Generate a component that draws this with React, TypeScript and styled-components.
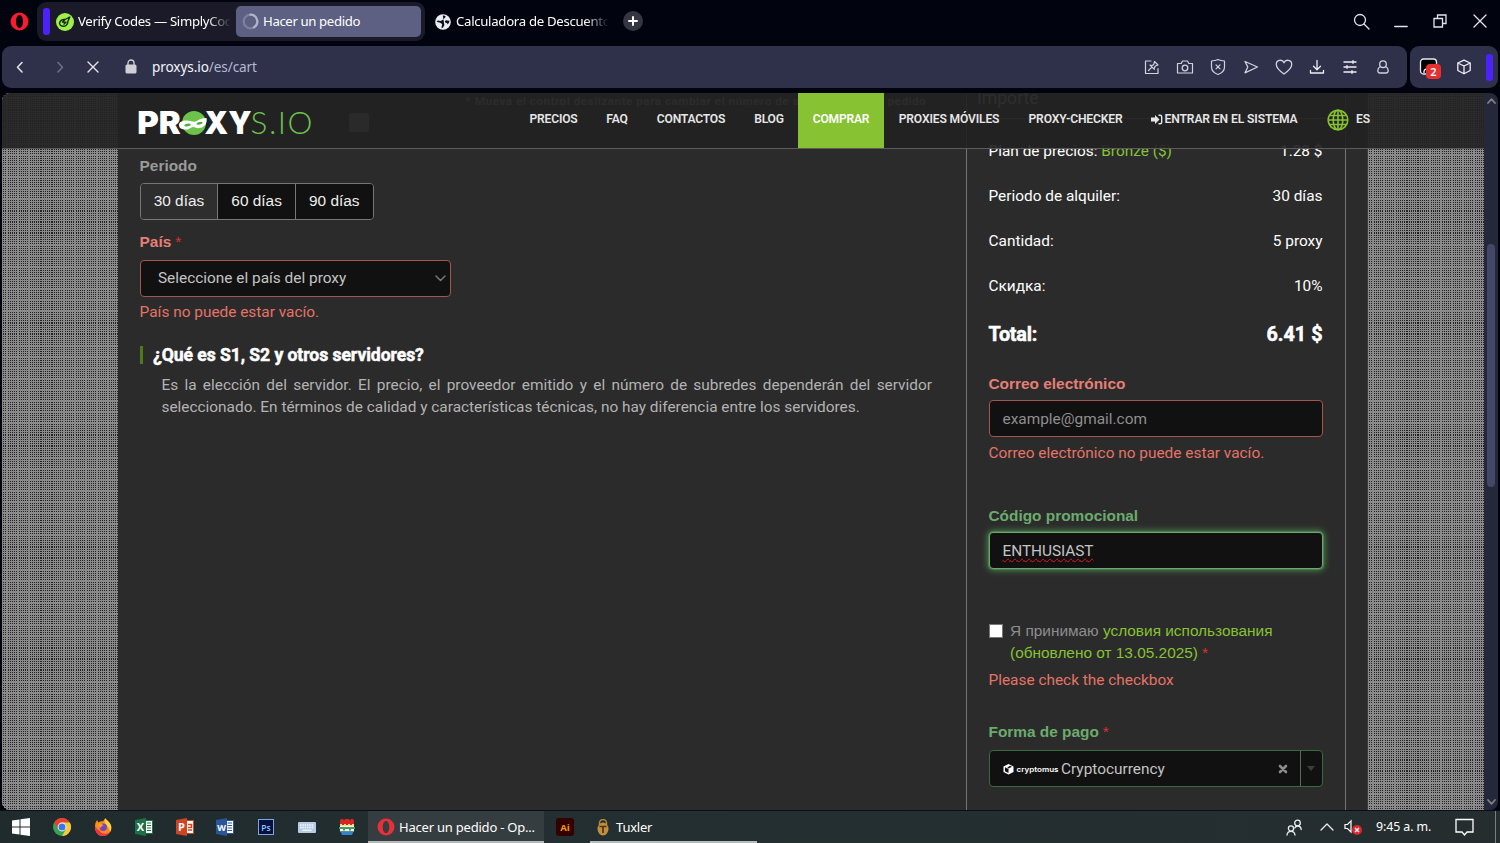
import React from "react";
import styled, { createGlobalStyle, css } from "styled-components";

const Global = createGlobalStyle`
  * { box-sizing: border-box; }
  html, body { margin: 0; padding: 0; background: #01030f; overflow: hidden; }
  body { font-family: Roboto, "Liberation Sans", sans-serif; font-size: 15.4px; line-height: 22px; color: #fff; }
`;

const ui = css`font-family: "Noto Sans", "Open Sans", sans-serif;`;

const Screen = styled.div`
  width: 1500px; height: 843px; display: flex; flex-direction: column; overflow: hidden; background: #01030f;
`;

/* ---------- tab strip ---------- */
const TabStrip = styled.div`
  ${ui} height: 46px; flex: none; display: flex; align-items: flex-start; padding-left: 10px; font-size: 13.2px; line-height: 19px;
`;
const OperaSlot = styled.div`width: 27px; height: 42px; display: flex; align-items: center;`;
const TabIsland = styled.div`
  width: 388px; height: 39px; margin-top: 2px; border-radius: 9px; background: #1b1a28; display: flex; align-items: center; padding: 0 4px 0 6px;
`;
const Accent = styled.div<{ $h: number }>`width: 7px; height: ${p => p.$h}px; border-radius: 3px; background: #4b22fb;`;
const Tab = styled.div<{ $w: number; $active?: boolean }>`
  width: ${p => p.$w}px; height: 31px; display: flex; align-items: center; gap: 4px; border-radius: 5px; padding-left: 6px;
  background: ${p => (p.$active ? "#5d6082" : "transparent")};
`;
const TabTitle = styled.span<{ $w: number; $ls: number; $fade?: boolean }>`
  width: ${p => p.$w}px; height: 20px; overflow: hidden; white-space: nowrap; letter-spacing: ${p => p.$ls}px;
  ${p => p.$fade && css`mask-image: linear-gradient(90deg, #000 calc(100% - 24px), transparent 100%);`}
`;
const FreeTab = styled.div`height: 43px; display: flex; align-items: center; gap: 5px; padding-left: 10px;`;
const NewTab = styled.div`
  width: 20px; height: 20px; margin: 11px 0 0 14px; border-radius: 50%; background: #343742; display: grid; place-items: center;
`;
const WindowButtons = styled.div`margin-left: auto; height: 42px; display: flex; align-items: center; padding-right: 0;`;
const WinBtn = styled.div`width: 39.7px; height: 42px; display: grid; place-items: center;`;

/* ---------- address bar ---------- */
const AddressRow = styled.div`height: 47px; flex: none; display: flex; gap: 3px; padding: 0 2px 4px;`;
const AddressBar = styled.div`
  ${ui} width: 1405px; height: 42px; border-radius: 9px; background: #2e3149; display: flex; align-items: center; padding: 0 7.5px 0 2px; font-size: 13.6px;
`;
const NavSlot = styled.div<{ $w: number }>`width: ${p => p.$w}px; height: 42px; display: grid; place-items: center;`;
const Url = styled.div`margin-left: -7px; color: #f4f5fb; letter-spacing: -0.1px; span { color: #b4b9d0; }`;
const ToolIcons = styled.div`margin-left: auto; display: flex; padding-right: 0;`;
const ToolIcon = styled.div`width: 33px; height: 41px; display: grid; place-items: center;`;
const ExtBar = styled.div`
  width: 88px; height: 42px; border-radius: 9px; background: #2e3149; display: flex; align-items: center; padding-left: 9px;
`;
const ExtBadgeWrap = styled.div`position: relative; width: 20px; height: 20px;`;
const Badge = styled.div`
  position: absolute; left: 7px; top: 7px; width: 15px; height: 15px; border-radius: 4px; background: #e5302f;
  ${ui} font-size: 11px; font-weight: 600; line-height: 15px; text-align: center;
`;
const ExtIcon = styled.div`margin: 0 13px 0 16px; display: flex;`;

/* ---------- web page ---------- */
const Viewport = styled.div`
  position: relative; width: 1496px; height: 717px; margin: 0 2px; flex: none; display: flex; border-radius: 8px; overflow: hidden;
`;
const Mesh = styled.div`
  flex: none; width: 116px; background-color: #222;
  background-image:
    repeating-linear-gradient(0deg, #8a8a8a 0 1.15px, transparent 1.15px 2.196px),
    repeating-linear-gradient(90deg, #8a8a8a 0 1.15px, transparent 1.15px 2.196px);
`;
const Body = styled.div`flex: none; width: 1250px; display: flex; background: #2b2b2b; border-right: 1px solid #3a3a3a;`;
const ScrollTrack = styled.div`
  width: 14px; background: #252839; display: flex; flex-direction: column; align-items: center; justify-content: space-between; padding: 5px 0 5px; z-index: 2;
`;
const ScrollThumb = styled.div`width: 8px; height: 243px; margin-top: 140px; margin-bottom: auto; border-radius: 4px; background: #434866;`;

const SiteHeader = styled.header`
  position: absolute; left: 0; top: 0; width: 1482px; height: 56px; display: flex; align-items: flex-start;
  background: rgba(34, 34, 34, 0.92); border-bottom: 1px solid #5c5c5c; padding-left: 136px;
`;
const Logo = styled.svg`display: block; margin-top: 14px;`;
const Nav = styled.nav`display: flex; margin-left: 202px;`;
const NavItem = styled.a<{ $w: number; $ls?: number; $active?: boolean }>`
  display: flex; align-items: center; justify-content: center; gap: 1px; width: ${p => p.$w}px; height: 55px; padding-bottom: 3px; white-space: nowrap;
  font-size: 12.1px; font-weight: 600; letter-spacing: ${p => p.$ls ?? -0.2}px; color: ${p => (p.$active ? "#fff" : "#e6e6e6")};
  background: ${p => (p.$active ? "#86c232" : "transparent")};
`;
const LangGlobe = styled.svg`margin: 2px 6px 0 0;`;

const OrderForm = styled.main`width: 848px; padding: 0 0 0 21.6px;`;
const SliderHint = styled.div`
  margin-left: 326px; height: 20px; line-height: 17px; font-size: 11.8px; font-weight: 700; color: #9a9a9a; white-space: nowrap; letter-spacing: 0.46px;
`;
const SliderKnob = styled.div`width: 20px; height: 19px; margin: 0 0 23.4px 209px; border-radius: 3px; background: #888;`;
const arial = css`font-family: "Liberation Sans", sans-serif;`;
const Label = styled.div<{ $c: string; $mb?: number }>`
  ${arial} font-weight: 700; height: 22px; margin-bottom: ${p => p.$mb ?? 5}px; color: ${p => p.$c};
`;
const Star = styled.span`font-weight: 400; color: #d9342f; margin-left: 4px; ${arial}`;
const Periods = styled.div`
  ${arial} width: 234px; height: 37px; margin: 5.6px 0 11px; display: flex; border: 1px solid #767676; border-radius: 4px; overflow: hidden;
`;
const Period = styled.div<{ $on?: boolean }>`
  flex: 1; display: grid; place-items: center; color: #eee; background: ${p => (p.$on ? "#2e2e2e" : "#111")};
  & + & { border-left: 1px solid #767676; }
`;
const Field = styled.div<{ $w: number; $border: string; $pad?: number; $color?: string; $glow?: boolean }>`
  width: ${p => p.$w}px; height: 37px; display: flex; align-items: center; padding-left: ${p => p.$pad ?? 13}px; border-radius: 4px;
  border: 1px solid ${p => p.$border}; background: #111; color: ${p => p.$color ?? "#c4c4c4"};
  ${p => p.$glow && css`box-shadow: 0 0 0 1px #4a7a4b, 0 0 7px 1px #4f9552;`}
`;
const FieldEnd = styled.div<{ $r: number }>`margin: 0 ${p => p.$r}px 0 auto; display: flex;`;
const ErrorText = styled.div<{ $mt: number; $mb: number }>`height: 22px; margin: ${p => p.$mt}px 0 ${p => p.$mb}px; color: #e57368;`;
const Question = styled.h4`
  height: 18px; line-height: 18px; margin: 0 0 10px 0.4px; padding-left: 10px; border-left: 3px solid #4f7a1c;
  font-size: 17.6px; font-weight: 700; letter-spacing: -0.07px; color: #fff; -webkit-text-stroke: 0.5px #fff;
`;
const Answer = styled.p`margin: 0; padding-left: 21.9px; width: 792.4px; text-align: justify; color: #b3b3b3;`;

const Summary = styled.aside`width: 380px; border-left: 1px solid #747474; border-right: 1px solid #747474; padding: 0 22px 0 21.5px;`;
const SummaryTitle = styled.div`
  height: 26px; line-height: 11px; margin: 0 -22px 21.2px -21.5px; padding-left: 10px; font-size: 17.6px; color: #bbb; border-bottom: 1px solid #747474;
`;
const Line = styled.div`display: flex; justify-content: space-between; height: 22px; margin: 0 0.5px 23px 0; white-space: nowrap;`;
const Total = styled.div`
  display: flex; justify-content: space-between; height: 28px; padding-top: 2px; line-height: 26px; margin: 0 0.5px 25px 0; font-size: 19.8px; font-weight: 700;
  -webkit-text-stroke: 0.5px #fff;
`;
const TotalLabel = styled.span`letter-spacing: -0.2px;`;
const Green = styled.span`color: #86c232;`;
const Typed = styled.span`
  text-decoration: underline wavy #e01620 1px; text-underline-offset: 2px; text-decoration-skip-ink: none; letter-spacing: -0.05px;
`;
const Terms = styled.div`${arial} display: flex; height: 44px; color: #8d8d8d; gap: 7.5px; white-space: nowrap;`;
const Check = styled.div`width: 14px; height: 14px; margin-top: 4px; background: #fff; border: 1px solid #777;`;
const Gap = styled.div<{ $h?: number; $w?: number }>`height: ${p => p.$h ?? 1}px; ${p => p.$w && css`width: ${p.$w}px;`}`;
const Splitter = styled.div`width: 22px; height: 35px; border-left: 1px solid #5c6a5c; display: grid; place-items: center;`;

/* ---------- taskbar ---------- */
const Taskbar = styled.div`
  ${ui} height: 33px; flex: none; display: flex; background: linear-gradient(90deg, #202b2e, #232f30 45%, #252d2f); border-top: 1px solid #0a0f1e; font-size: 13px;
`;
const Pin = styled.div<{ $w?: number }>`width: ${p => p.$w ?? 40.7}px; height: 32px; display: grid; place-items: center; padding-right: 1px;`;
const Task = styled.div<{ $w: number; $on?: boolean; $pad: number; $gap: number; $ls?: number }>`
  width: ${p => p.$w}px; height: 32px; display: flex; align-items: center; padding-left: ${p => p.$pad}px; gap: ${p => p.$gap}px; white-space: nowrap;
  background: ${p => (p.$on ? "#363d40" : "transparent")}; box-shadow: inset 0 -2px 0 #b7bbbd; letter-spacing: ${p => p.$ls ?? 0}px;
`;
const Tray = styled.div`margin-left: auto; display: flex; align-items: center; height: 32px;`;
const TraySlot = styled.div<{ $w: number }>`width: ${p => p.$w}px; display: grid; place-items: center;`;
const Clock = styled.div`width: 57px; font-size: 12.4px; white-space: nowrap; letter-spacing: -0.1px;`;
const ShowDesktop = styled.div`width: 5px; height: 32px; border-left: 1px solid #768083;`;

const OperaO = ({ s, x = false }: { s: number; x?: boolean }) => (
  <svg width={s} height={s} viewBox="0 0 20 20">
    <path fillRule="evenodd" fill={x ? "#e8303b" : "#fb1b30"} d="M10 .6a9.4 9.4 0 1 0 0 18.8A9.4 9.4 0 0 0 10 .6Zm0 2.6c2.1 0 3.7 3 3.7 6.8s-1.6 6.8-3.7 6.8S6.3 13.8 6.3 10 7.900 3.200 10 3.200Z" />
  </svg>
);
const S = (p: { w?: number; h?: number; c?: string; sw?: number; children: React.ReactNode }) => (
  <svg width={p.w ?? 18} height={p.h ?? p.w ?? 18} viewBox={`0 0 ${p.w ?? 18} ${p.h ?? p.w ?? 18}`} fill="none" stroke={p.c ?? "#cfd2e0"} strokeWidth={p.sw ?? 1.3} strokeLinecap="round" strokeLinejoin="round">
    {p.children}
  </svg>
);
const Office = ({ c, t, children }: { c: string; t: string; children: React.ReactNode }) => (
  <svg width="18" height="18" viewBox="0 0 18 18">
    <rect x="9" y="2.500" width="8.500" height="13" fill="#fff" stroke={c} />
    {children}
    <path d="M0 2 11 0v18L0 16Z" fill={c} />
    <text x="5.500" y="13" textAnchor="middle" fontFamily="Open Sans, sans-serif" fontWeight="700" fontSize={t === "W" ? 9 : 11} fill="#fff">{t}</text>
  </svg>
);

export default function App() {
  return (
    <>
      <Global />
      <Screen>
        <TabStrip>
          <OperaSlot><OperaO s={19} /></OperaSlot>
          <TabIsland>
            <Accent $h={27} />
            <Tab $w={186}>
              <svg width="18" height="18" viewBox="0 0 18 18">
                <circle cx="9" cy="9" r="9" fill="#9ff04a" />
                <path d="M3.500 10.500C4 7.500 6.500 6 9 6.500l4.800-2.500M3.500 10.500C4 13.500 8 13.800 10 12.500c2-1.300 2-3 2-4.500l1.800-4M9 6.500 6.500 9l3.500.3-2 1.700" fill="none" stroke="#16240c" strokeWidth="1.400" strokeLinejoin="round" strokeLinecap="round" />
              </svg>
              <TabTitle $w={153} $ls={-0.33} $fade>Verify Codes — SimplyCodes</TabTitle>
            </Tab>
            <Tab $w={185} $active>
              <svg width="17" height="17" viewBox="0 0 17 17" fill="none" strokeWidth="2.200">
                <circle cx="8.500" cy="8.500" r="6.800" stroke="#7d819e" />
                <path d="M8.500 1.700a6.800 6.800 0 0 1 3.500 12.600" stroke="#b0b4c8" strokeLinecap="round" />
              </svg>
              <TabTitle $w={110} $ls={-0.38}>Hacer un pedido</TabTitle>
            </Tab>
          </TabIsland>
          <FreeTab>
            <svg width="16" height="16" viewBox="0 0 16 16">
              <circle cx="8" cy="8" r="7.800" fill="#e9edf2" />
              <path d="M7.800 1.500c2.700-.3 3.600 1 2.100 2.200C8.900 4.500 9 5.300 7.700 5.700 6.500 6 6.600 7 5.300 6.900 4 6.800 3 6 1.600 7.200c1 1.300 2.400 1 3.500 1.500 1.300.6 2.300 1 2 2.300-.3 1.100-.9 2-.3 3.200 1.700-.2 1.600-2 2.600-2.900" fill="#0b0e1b" />
              <path d="M14.300 6.500c-1.800.5-2.300-.6-3.600-.1-1.300.6-1 2.100.3 2.300 1 .1 1.500.6 1.400 1.700 1.300-.6 2.200-2.200 1.900-3.900Z" fill="#0b0e1b" />
            </svg>
            <TabTitle $w={153} $ls={-0.3} $fade>Calculadora de Descuentos</TabTitle>
          </FreeTab>
          <NewTab><S w={10} c="#fff" sw={2}><path d="M5 1v8M1 5h8" /></S></NewTab>
          <WindowButtons>
            <WinBtn><S w={17} c="#e4e6ee"><circle cx="7" cy="7" r="5.500" /><path d="m11 11 5 5" /></S></WinBtn>
            <WinBtn><S w={14} c="#e4e6ee"><path d="M.7 12.500h12.500" /></S></WinBtn>
            <WinBtn><S w={14} c="#e4e6ee"><path d="M1 4.500h8.500V13H1ZM4.500 4.300V1H13v8.500H9.700" strokeLinejoin="miter" /></S></WinBtn>
            <WinBtn><S w={14} c="#e4e6ee"><path d="m1 1 12 12M13 1 1 13" /></S></WinBtn>
          </WindowButtons>
        </TabStrip>

        <AddressRow>
          <AddressBar>
            <NavSlot $w={32}><S w={12} c="#e4e6f0" sw={1.500}><path d="M8 1.500 3.500 6.200 8 11" /></S></NavSlot>
            <NavSlot $w={48}><S w={12} c="#6c7088" sw={1.500}><path d="M4 1.500 8.500 6.200 4 11" /></S></NavSlot>
            <NavSlot $w={18}><S w={12} c="#e4e6f0" sw={1.400}><path d="m1 1 10 10M11 1 1 11" /></S></NavSlot>
            <NavSlot $w={57}>
              <svg width="12" height="16" viewBox="0 0 12 16"><rect x=".5" y="5.500" width="11" height="9" rx="1.500" fill="#cfcfd8" /><path d="M3 6.500V4a3 3 0 0 1 6 0v2.500" fill="none" stroke="#cfcfd8" strokeWidth="1.300" /></svg>
            </NavSlot>
            <Url>proxys.io<span>/es/cart</span></Url>
            <ToolIcons>
              <ToolIcon><S><path d="M8 3H2.500v12.500H15V10.500M5.500 12.500l3.200-3.200M7 7l4.300 4.300M8 7.800c1.500-.6 2-.3 2.800-1.500L11.500 3.500 15 7l-2.500 1c-1 .8-.8 1.500-1.500 2.700" strokeWidth="1.200" /></S></ToolIcon>
              <ToolIcon><S><path d="M1.500 5.500h3.700L6.500 3h5l1.300 2.500h3.700v9.500h-15Z" strokeWidth="1.200" /><circle cx="9" cy="10" r="2.800" /></S></ToolIcon>
              <ToolIcon><S><path d="M9 1.500c2 1 4 1.400 6.500 1.500v6c0 3.500-2.500 6-6.500 7.500C5 15 2.500 12.500 2.500 9V3C5 2.900 7 2.500 9 1.500ZM7 6.800l4 4M11 6.800l-4 4" strokeWidth="1.200" /></S></ToolIcon>
              <ToolIcon><S><path d="M3 3.500 15.500 9 3 14.800 5.800 9Z" /></S></ToolIcon>
              <ToolIcon><S><path d="M9 16C4 12.500 1.300 9.500 1.300 6.500a4 4 0 0 1 7.700-1.700 4 4 0 0 1 7.700 1.700C16.700 9.500 14 12.500 9 16Z" /></S></ToolIcon>
              <ToolIcon><S c="#eceef6"><path d="M9 2.500v9M5.500 8.200 9 11.700l3.500-3.500M2.500 12.500V15h13v-2.500" /></S></ToolIcon>
              <ToolIcon><S c="#eceef6"><path d="M2.500 4h13M2.500 9h13M2.500 14h13M12 2.300v3.400M6 7.300v3.400M11 12.300v3.400" strokeWidth="1.400" strokeLinecap="butt" /></S></ToolIcon>
              <ToolIcon><S><circle cx="9" cy="6.200" r="3.300" /><path d="M6.300 8.500C4.200 9.700 3.800 11 3.800 12.500c0 1.600.8 2.500 2.200 2.500h6c1.400 0 2.200-.9 2.200-2.500 0-1.500-.4-2.800-2.500-4" /></S></ToolIcon>
            </ToolIcons>
          </AddressBar>
          <ExtBar>
            <ExtBadgeWrap>
              <S w={20}><rect x="1.500" y="2" width="16" height="15" rx="3" fill="#000" stroke="#e8e8ee" /><path d="M7.500 12A3 3 0 0 0 5 15.500" stroke="#fff" /></S>
              <Badge>2</Badge>
            </ExtBadgeWrap>
            <ExtIcon><S c="#eceef6"><path d="m9 2.200 6.200 2.800v7.500L9 15.800l-6.200-3.300V5ZM2.800 5 9 8l6.200-3M9 8v7.800" /></S></ExtIcon>
            <Accent $h={27} />
          </ExtBar>
        </AddressRow>

        <Viewport>
          <Mesh />
          <Body>
            <OrderForm>
              <SliderHint>* Mueva el control deslizante para cambiar el número de servidores en el pedido</SliderHint>
              <SliderKnob />
              <Label $c="#9a9a9a">Periodo</Label>
              <Periods>
                <Period $on>30 días</Period>
                <Period>60 días</Period>
                <Period>90 días</Period>
              </Periods>
              <Label $c="#e57f76" $mb={7}>País<Star>*</Star></Label>
              <Field $w={311} $border="#a4554f" $pad={17.400}>
                Seleccione el país del proxy
                <FieldEnd $r={4}><S w={11} h={7} c="#777" sw={1.500}><path d="m1 1 4.500 4.500L10 1" /></S></FieldEnd>
              </Field>
              <ErrorText $mt={4.500} $mb={22.500}>País no puede estar vacío.</ErrorText>
              <Question>¿Qué es S1, S2 y otros servidores?</Question>
              <Answer>
                Es la elección del servidor. El precio, el proveedor emitido y el número de subredes dependerán del servidor
                seleccionado. En términos de calidad y características técnicas, no hay diferencia entre los servidores.
              </Answer>
            </OrderForm>
            <Summary>
              <SummaryTitle>Importe</SummaryTitle>
              <Line><span>Plan de precios: <Green>Bronze ($)</Green></span><span>1.28 $</span></Line>
              <Line><span>Periodo de alquiler:</span><span>30 días</span></Line>
              <Line><span>Cantidad:</span><span>5 proxy</span></Line>
              <Line><span>Скидка:</span><span>10%</span></Line>
              <Total><TotalLabel>Total:</TotalLabel><span>6.41 $</span></Total>
              <Label $c="#e57f76">Correo electrónico</Label>
              <Field $w={334} $border="#a4554f" $color="#8f8f8f">example@gmail.com</Field>
              <ErrorText $mt={5} $mb={41}>Correo electrónico no puede estar vacío.</ErrorText>
              <Label $c="#6bab6d">Código promocional</Label>
              <Field $w={334} $border="#6fa870" $glow><Typed>ENTHUSIAST</Typed></Field>
              <Gap $h={51} />
              <Terms>
                <Check />
                <div>Я принимаю <Green>условия использования<br />(обновлено от 13.05.2025)</Green><Star>*</Star></div>
              </Terms>
              <ErrorText $mt={5} $mb={30}>Please check the checkbox</ErrorText>
              <Label $c="#6bab6d" $mb={7}>Forma de pago<Star>*</Star></Label>
              <Field $w={334} $border="#3a6a40">
                <svg width="58.500" height="16" viewBox="0 0 58.500 16">
                  <path d="M5.500 3 10.500 5.500v5.500L5.500 13.500.5 11V5.500Z" fill="#fff" />
                  <path d="M2 6.300 5.500 8v4L2 10.300ZM7 4.800l2 1-3.500 1.600-1.300-.7" fill="#111" />
                  <text x="13.500" y="11" textLength="42" lengthAdjust="spacingAndGlyphs" fontFamily="Inter, sans-serif" fontWeight="600" fontSize="7" fill="#fff">cryptomus</text>
                </svg>
                Cryptocurrency
                <FieldEnd $r={12}><S w={10} c="#8c8c8c" sw={2.600}><path d="m2 2 6 6M8 2 2 8" /></S></FieldEnd>
                <Splitter><svg width="8" height="5" viewBox="0 0 8 5"><path d="M0 0h8L4 5Z" fill="#3d3d3d" /></svg></Splitter>
              </Field>
            </Summary>
          </Body>
          <Mesh />
          <ScrollTrack>
            <S w={9} h={6} c="#80828c" sw={1.700}><path d="m1 5 3.500-3.800L8 5" /></S>
            <ScrollThumb />
            <S w={9} h={6} c="#80828c" sw={1.700}><path d="m1 1 3.500 3.800L8 1" /></S>
          </ScrollTrack>
          <SiteHeader>
            <Logo width="175" height="32" viewBox="0 0 175 32">
              <circle cx="56" cy="16" r="12" fill="#6cc24a" />
              <g fontFamily="Inter, sans-serif" fontWeight="900" fontSize="31" fill="#fff">
                <text x="-.8" y="27" textLength="43.500" lengthAdjust="spacingAndGlyphs">PR</text>
                <text x="66.500" y="27" textLength="47" lengthAdjust="spacingAndGlyphs">XY</text>
              </g>
              <path d="M41 18c0-3 3-4.500 7-4.500 4 0 6 1.300 8.500 1.200 3-.2 5-3.700 12-3.700 1 4-1 9-6.500 10-4 .7-5-1.200-7-1-2.300.2-3 2.500-7 2.500-4 0-7-1-7-4.500Z" fill="#fff" />
              <ellipse cx="49.500" cy="18" rx="3.200" ry="1.300" fill="#4fae3b" transform="rotate(-8 49.500 18)" />
              <ellipse cx="61.500" cy="16.300" rx="3.200" ry="1.300" fill="#4fae3b" transform="rotate(-14 61.500 16.300)" />
              <text x="112.500" y="27" textLength="62" lengthAdjust="spacing" fontFamily="Lato, sans-serif" fontWeight="300" fontSize="31.500" fill="#6cc24a">S.IO</text>
            </Logo>
            <Nav>
              <NavItem $w={77}>PRECIOS</NavItem>
              <NavItem $w={50}>FAQ</NavItem>
              <NavItem $w={98}>CONTACTOS</NavItem>
              <NavItem $w={58}>BLOG</NavItem>
              <NavItem $w={86} $active>COMPRAR</NavItem>
              <NavItem $w={130} $ls={-0.15}>PROXIES MÓVILES</NavItem>
              <NavItem $w={123} $ls={-0.15}>PROXY-CHECKER</NavItem>
              <NavItem $w={175} $ls={-0.1}>
                <svg width="12" height="11" viewBox="0 0 12 11"><path d="M0 3.500h4V1l4.500 4.500L4 10V7.500H0Z" fill="#e6e6e6" /><path d="M7.500 1.300h1.700a1.500 1.500 0 0 1 1.500 1.500v5.400a1.500 1.500 0 0 1-1.500 1.500H7.500" fill="none" stroke="#e6e6e6" strokeWidth="1.400" /></svg>
                ENTRAR EN EL SISTEMA
              </NavItem>
              <NavItem $w={73}>
                <LangGlobe width="22" height="22" viewBox="0 0 22 22" fill="none" stroke="#86c232" strokeWidth="1.600">
                  <circle cx="11" cy="11" r="9.800" /><ellipse cx="11" cy="11" rx="4.800" ry="9.800" /><path d="M11 1v20M1.500 11h19M3 6.500h16M3 15.500h16" />
                </LangGlobe>
                ES
              </NavItem>
            </Nav>
          </SiteHeader>
        </Viewport>

        <Taskbar>
          <Pin $w={42.600}><svg width="18" height="18" viewBox="0 0 18 18" fill="#fff"><path d="M0 2.500 7.500 1.500v7H0ZM8.500 1.300 18 0v8.500H8.500ZM0 9.500h7.500v7L0 15.500ZM8.500 9.500H18V18l-9.500-1.300Z" /></svg></Pin>
          <Pin>
            <svg width="18" height="18" viewBox="0 0 18 18">
              <circle cx="9" cy="9" r="9" fill="#34a353" />
              <path d="M9 0a9 9 0 0 1 7.800 4.500H9L5.100 11.200 1.200 4.500A9 9 0 0 1 9 0Z" fill="#e8402f" />
              <path d="M16.800 4.500A9 9 0 0 1 9 18l3.900-6.800L12.900 6.800 9 4.500Z" fill="#fcc934" />
              <circle cx="9" cy="9" r="4.400" fill="#fff" /><circle cx="9" cy="9" r="3.500" fill="#3b78e7" />
            </svg>
          </Pin>
          <Pin>
            <svg width="18" height="18" viewBox="0 0 18 18">
              <path d="M1.500 5 3 2l1.500 2.500C6 3 8.500 3 9 3.300L11.500 0c0 2 4 3 5.500 7.500C18.500 13 14.500 18 9 18S-.5 13 1.500 5Z" fill="#ff8a16" />
              <path d="M11.500 0c0 2 4 3 5.500 7.500.7 2.500 0 5-1 6.500C15.500 9 12 7 11 5 10 3 11 1 11.500 0Z" fill="#ffd33c" />
              <path d="M1.500 8C0 13 4 18 9 18c3 0 5.500-1.500 7-4-4 3-9 2-10.500-1.500C4 12 2 10.500 1.500 8Z" fill="#f0324e" />
              <circle cx="9.300" cy="9.300" r="3.700" fill="#7348c8" />
              <path d="M4 6.500C6 5 8 6 9.500 7.500c-2 0-2 1.500-3.500 2.500Z" fill="#ffa61f" />
            </svg>
          </Pin>
          <Pin><Office c="#1e7145" t="X"><path d="M12 5h4M12 7.500h4M12 10h4M12 12.500h4" stroke="#1e7145" /></Office></Pin>
          <Pin><Office c="#d04423" t="P"><path d="M12 6.500h3.500v3H12M12 12h4" stroke="#d04423" strokeWidth="1.500" fill="none" /></Office></Pin>
          <Pin><Office c="#2a5699" t="W"><path d="M11.500 5H16M11.500 7.500H16M11.500 10H16M11.500 12.500H16" stroke="#2a5699" /></Office></Pin>
          <Pin>
            <svg width="16" height="16" viewBox="0 0 16 16"><rect x=".5" y=".5" width="15" height="15" fill="#061043" stroke="#7fa6dd" /><text x="8" y="11.500" textAnchor="middle" fontFamily="Open Sans, sans-serif" fontWeight="600" fontSize="8.500" fill="#8fc7f5">Ps</text></svg>
          </Pin>
          <Pin>
            <svg width="18" height="11" viewBox="0 0 18 11"><rect width="18" height="11" rx="1" fill="#b7cbe6" /><path d="M2 3h14M2 5.500h14" stroke="#f4f8fd" strokeWidth="1.500" strokeDasharray="1.500 .8" /><path d="M4.500 8.300h9" stroke="#f4f8fd" strokeWidth="1.300" /></svg>
          </Pin>
          <Pin>
            <svg width="16" height="16" viewBox="0 0 16 16">
              <path d="M1 1.500 2 0h2l1 1.500L6 0h4l1 1.500L12 0h2l1 1.500V5H1Z" fill="#d9251d" /><path d="M1 5h14v2H1Z" fill="#f3d9a0" /><path d="M0 8h16v2H0Z" fill="#3da44b" />
              <path d="M3 4h2v2H3ZM7 4h2v2H7ZM11 4h2v2h-2Z" fill="#d9251d" /><path d="M1 7h14v1H1ZM1 10h14v2.500H1Z" fill="#f1f1f1" /><path d="M1.500 12.500h13L13 16H3Z" fill="#3482c9" /><path d="M4 10h2v1.500H4ZM10 10h2v1.500h-2Z" fill="#3da44b" />
            </svg>
          </Pin>
          <Task $w={176} $on $pad={9} $gap={4} $ls={-0.22}><OperaO s={18} x />Hacer un pedido - Op...</Task>
          <Pin $w={42}>
            <svg width="18" height="18" viewBox="0 0 18 18"><rect width="18" height="18" rx="3" fill="#330000" /><text x="9" y="12.500" textAnchor="middle" fontFamily="Open Sans, sans-serif" fontWeight="700" fontSize="9.500" fill="#ff9a00">Ai</text></svg>
          </Pin>
          <Gap $w={4} />
          <Task $w={167} $pad={7} $gap={7} $ls={-0.25}>
            <svg width="12" height="17" viewBox="0 0 12 17"><path d="M2.500 6V4a3.500 3.500 0 0 1 7 0v2" fill="none" stroke="#b98538" strokeWidth="1.500" /><ellipse cx="6" cy="10" rx="5.500" ry="6.500" fill="#c38d3c" /><path d="M2.500 7.500h7M6 7.500V14" stroke="#4a3616" strokeWidth="1.700" /></svg>
            Tuxler
          </Task>
          <Tray>
            <TraySlot $w={32}><S w={17} c="#e8ecec"><circle cx="11.500" cy="4" r="2.800" /><path d="M8.800 9c.7-1.500 1.500-2 2.700-2 2 0 3.500 1.500 3.700 3.500" /><circle cx="5" cy="9.500" r="2.600" /><path d="M1 16c.3-2.500 2-3.700 4-3.700s3.700 1.200 4 3.700" /></S></TraySlot>
            <TraySlot $w={34}><S w={14} h={8} c="#e8ecec"><path d="m1 7 6-6 6 6" /></S></TraySlot>
            <TraySlot $w={18}>
              <svg width="18" height="16" viewBox="0 0 18 16"><path d="M1 5.500h2.500L7 2v11l-3.500-3.500H1Z" fill="none" stroke="#fff" strokeWidth="1.200" /><circle cx="13" cy="11" r="5" fill="#e0262d" /><path d="m11 9 4 4M15 9l-4 4" stroke="#fff" strokeWidth="1.300" /></svg>
            </TraySlot>
            <Gap $w={14} />
            <Clock>9:45 a. m.</Clock>
            <TraySlot $w={62}><S w={19} h={18} c="#fff"><path d="M1 1.500h17V14h-6l-2.500 3L7 14H1Z" strokeLinejoin="miter" /></S></TraySlot>
            <ShowDesktop />
          </Tray>
        </Taskbar>
      </Screen>
    </>
  );
}
